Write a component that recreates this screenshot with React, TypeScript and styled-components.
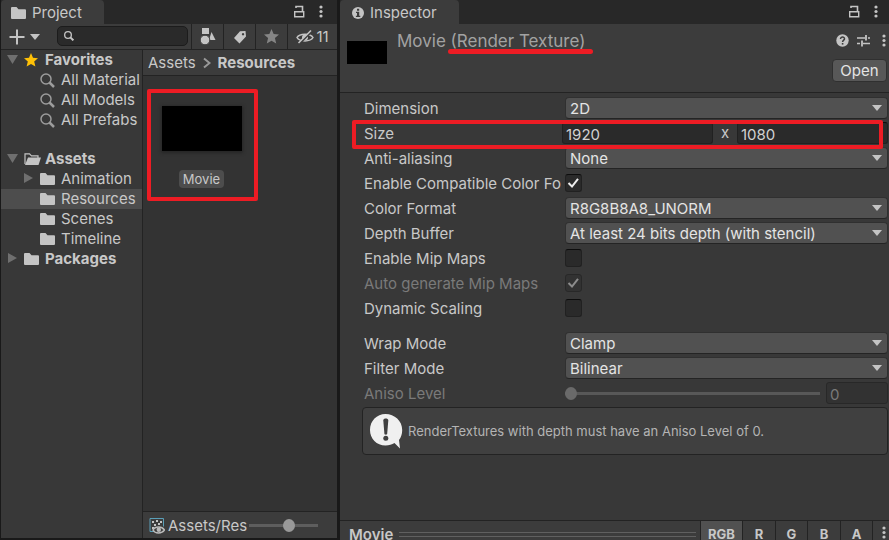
import React from "react";
import styled, { createGlobalStyle } from "styled-components";

const color = {
  edge: "#191919",
  strip: "#282828",
  bar: "#3c3c3c",
  body: "#383838",
  canvas: "#333333",
  line: "#232323",
  field: "#2a2a2a",
  control: "#515151",
  text: "#c8c8c8",
  bright: "#e4e4e4",
  faded: "#7a7a7a",
  icon: "#c4c4c4",
  mark: "#ed1c24",
};

const GlobalStyle = createGlobalStyle`
  * { box-sizing: border-box; }
  body { margin: 0; background: ${color.edge}; }
  body, button, input, select {
    font-family: Inter, "Liberation Sans", sans-serif;
    font-size: 15px;
    line-height: 20px;
    color: ${color.text};
  }
  button { padding: 0; border: 0; background: none; }
`;

const Editor = styled.div`
  display: grid;
  grid-template-columns: 337px minmax(0, 1fr);
  gap: 3px;
  height: 100vh;
  overflow: hidden;
`;

const Panel = styled.section<{ $docked?: boolean }>`
  display: flex;
  flex-direction: column;
  min-width: 0;
  min-height: 0;
  background: ${color.body};
  border-left: ${(p) => (p.$docked ? `1px solid ${color.edge}` : "0")};
  border-bottom: ${(p) => (p.$docked ? `2px solid ${color.edge}` : "0")};
`;

const TabStrip = styled.header`
  display: flex;
  flex: 0 0 24px;
  align-items: stretch;
  background: ${color.strip};
`;

const Tab = styled.button<{ $left: number }>`
  display: flex;
  align-items: center;
  gap: 6px;
  padding: 2px 22px 0 ${(p) => p.$left}px;
  background: ${color.bar};
  border-radius: 4px 4px 0 0;
`;

const StripActions = styled.div<{ $right: number }>`
  display: flex;
  align-items: center;
  gap: 14px;
  margin-left: auto;
  padding: 0 ${(p) => p.$right}px 2px 0;
`;

const IconButton = styled.button`
  display: flex;
  align-items: center;
  justify-content: center;
`;

const Toolbar = styled.div`
  display: flex;
  flex: 0 0 26px;
  background: ${color.bar};
  border-bottom: 1px solid ${color.line};
`;

const AddButton = styled.button`
  display: flex;
  align-items: center;
  gap: 5px;
  width: 56px;
  padding-left: 8px;
`;

const SearchBox = styled.label`
  display: flex;
  flex: 1;
  align-items: center;
  gap: 4px;
  min-width: 0;
  height: 20px;
  margin: 2px 3px 0 0;
  padding: 0 6px;
  background: ${color.field};
  border: 1px solid #1c1c1c;
  border-radius: 5px;

  input {
    flex: 1;
    min-width: 0;
    height: 16px;
    padding: 0;
    background: none;
    border: 0;
    outline: 0;
  }
`;

const ToolButton = styled.button<{ $wide?: boolean }>`
  display: flex;
  align-items: center;
  justify-content: center;
  gap: 2px;
  width: ${(p) => (p.$wide ? 50 : 32)}px;
  border-left: 1px solid ${color.line};
`;

const ProjectBody = styled.div`
  display: grid;
  grid-template-columns: 142px minmax(0, 1fr);
  flex: 1;
  min-height: 0;
`;

const TreePane = styled.nav`
  border-right: 1px solid ${color.line};
  overflow: hidden;
`;

const TreeList = styled.ul`
  margin: 0 0 19px;
  padding: 0;
  list-style: none;

  & + & { margin: 0; }
`;

const TreeItem = styled.button<{ $level: number; $selected?: boolean; $bold?: boolean }>`
  display: grid;
  grid-template-columns: 14px 16px auto;
  align-items: center;
  justify-content: start;
  column-gap: 5px;
  width: 100%;
  height: 20px;
  padding-left: ${(p) => 4 + p.$level * 16}px;
  background: ${(p) => (p.$selected ? "#4d4d4d" : "none")};
  font-weight: ${(p) => (p.$bold ? 700 : 400)};
  white-space: nowrap;
`;

const BrowserPane = styled.div`
  display: flex;
  flex-direction: column;
  min-width: 0;
  background: ${color.canvas};
`;

const Breadcrumb = styled.div`
  display: flex;
  flex: 0 0 26px;
  align-items: center;
  gap: 7px;
  padding-left: 5px;
  background: ${color.bar};
  border-bottom: 1px solid ${color.line};
`;

const Crumb = styled.a<{ $current?: boolean }>`
  color: ${color.text};
  font-weight: ${(p) => (p.$current ? 700 : 400)};
  text-decoration: none;
`;

const AssetGrid = styled.div`
  display: flex;
  flex: 1;
  flex-wrap: wrap;
  align-content: flex-start;
  padding: 13px 4px;
`;

const AssetTile = styled.button`
  display: flex;
  flex-direction: column;
  align-items: center;
  gap: 19px;
  width: 111px;
  height: 112px;
  padding: 13px 2px 0 0;
  border: 4px solid ${color.mark};
  border-radius: 2px;
`;

const Thumbnail = styled.span`
  width: 80px;
  height: 45px;
  background: #000;
  box-shadow: 0 1px 3px 1px #262626;
`;

const AssetName = styled.span`
  height: 18px;
  padding: 0 4px;
  background: #4d4d4d;
  border-radius: 4px;
  font-size: 13px;
  line-height: 19px;
`;

const StatusBar = styled.footer`
  display: flex;
  flex: 0 0 27px;
  align-items: center;
  gap: 3px;
  padding: 0 19px 0 6px;
  background: ${color.bar};
  border-top: 1px solid ${color.line};
`;

const StatusPath = styled.span`
  flex: 1;
  min-width: 0;
  padding-top: 2px;
  white-space: nowrap;
`;

const Range = styled.input<{ $thumb: string; $track: string }>`
  flex: 1;
  min-width: 0;
  height: 13px;
  margin: 0;
  background: none;
  appearance: none;

  &::-webkit-slider-runnable-track {
    height: 3px;
    background: ${(p) => p.$track};
  }
  &::-webkit-slider-thumb {
    appearance: none;
    width: 12px;
    height: 13px;
    margin-top: -5px;
    background: ${(p) => p.$thumb};
    border-radius: 50%;
  }
`;

const ZoomRange = styled(Range)`
  flex: 0 0 69px;
`;

const ObjectHeader = styled.div`
  display: flex;
  flex: 0 0 69px;
  gap: 10px;
  padding: 0 2px 0 7px;
  background: ${color.bar};
  border-bottom: 1px solid ${color.line};
`;

const ObjectPreview = styled.div`
  flex: 0 0 40px;
  height: 23px;
  margin-top: 17px;
  background: #000;
`;

const ObjectTitle = styled.h1`
  flex: 1;
  margin: 7px 0 0;
  color: #a2a2a2;
  font-size: 17px;
  font-weight: 400;
  line-height: 20px;
`;

const Underlined = styled.span`
  position: relative;

  &::after {
    content: "";
    position: absolute;
    left: -3px;
    right: -8px;
    top: 18px;
    height: 5px;
    background: ${color.mark};
    border-radius: 3px;
  }
`;

const HeaderActions = styled.div`
  display: flex;
  flex-direction: column;
  align-items: flex-end;
  gap: 11px;
  padding-top: 8px;
`;

const ActionIcons = styled.div`
  display: flex;
  align-items: center;
  gap: 8px;
  height: 16px;
  padding-right: 1px;

  > :last-child { padding-left: 4px; }
`;

const OpenButton = styled.button`
  width: 55px;
  height: 23px;
  background: #585858;
  border: 1px solid #303030;
  border-radius: 4px;
  color: ${color.bright};
`;

const Properties = styled.div`
  display: flex;
  flex: 1;
  flex-direction: column;
  gap: 3px;
  padding: 4px 1px 0 24px;
`;

const Group = styled.div`
  display: flex;
  flex-direction: column;
  gap: 3px;
  margin-bottom: 10px;

  & + & { margin-bottom: 0; }
`;

const PropertyRow = styled.div<{ $label?: number; $off?: boolean }>`
  position: relative;
  display: grid;
  grid-template-columns: ${(p) => p.$label ?? 201}px minmax(0, 1fr);
  align-items: center;
  height: 22px;
  color: ${(p) => (p.$off ? color.faded : color.text)};

  > label {
    padding-top: 2px;
    white-space: nowrap;
  }
`;

const MarkFrame = styled.span`
  position: absolute;
  z-index: 1;
  inset: -2px 5px -5px -12px;
  border: 4px solid ${color.mark};
  border-radius: 2px;
  pointer-events: none;
`;

const SelectBox = styled.span`
  position: relative;
  display: block;

  select {
    display: block;
    width: 100%;
    height: 22px;
    padding: 1px 24px 0 4px;
    background: ${color.control};
    border: 1px solid #303030;
    border-bottom-color: #242424;
    border-radius: 4px;
    color: ${color.bright};
    appearance: none;
  }
  svg {
    position: absolute;
    right: 6px;
    top: 8px;
    pointer-events: none;
  }
`;

const SizePair = styled.div`
  display: grid;
  grid-template-columns: minmax(0, 1fr) 24px minmax(0, 1fr);
  align-items: center;
  text-align: center;
`;

const TextField = styled.input`
  width: 100%;
  height: 22px;
  padding: 2px 3px 0;
  background: ${color.field};
  border: 1px solid #212121;
  border-top-color: #0d0d0d;
  border-radius: 3px;
  color: #d2d2d2;

  &:disabled {
    background: #323232;
    border-color: #282828;
    color: ${color.faded};
  }
`;

const SliderField = styled.div`
  display: grid;
  grid-template-columns: minmax(0, 1fr) 62px;
  align-items: center;
  gap: 6px;
`;

const CheckBox = styled.span`
  position: relative;
  width: 17px;
  height: 18px;

  input {
    display: block;
    width: 17px;
    height: 18px;
    margin: 0;
    background: ${color.field};
    border: 1px solid #212121;
    border-top-color: #0d0d0d;
    border-radius: 3px;
    appearance: none;
  }
  input:disabled {
    background: #323232;
    border-color: #282828;
  }
  svg {
    position: absolute;
    left: 2px;
    top: 3px;
    display: none;
    pointer-events: none;
  }
  input:checked + svg { display: block; }
`;

const HelpBox = styled.p`
  display: flex;
  align-items: center;
  gap: 5px;
  height: 48px;
  margin: 0 0 0 -2px;
  padding-left: 6px;
  background: #404040;
  border: 1px solid ${color.line};
  border-radius: 4px;
  color: #b4b4b4;
  font-size: 13px;
`;

const PreviewBar = styled.footer`
  display: flex;
  flex: 0 0 20px;
  overflow: hidden;
  background: ${color.bar};
  border-top: 1px solid ${color.line};
`;

const PreviewTitle = styled.h2`
  margin: 0;
  padding: 4px 6px 0 9px;
  font-size: 15px;
  font-weight: 600;
  line-height: 20px;
`;

const DragHandle = styled.div`
  flex: 1;
  height: 5px;
  margin: 11px 4px 0 0;
  border: solid #606060;
  border-width: 1px 0;
`;

const ChannelButton = styled.button<{ $width: number; $active?: boolean }>`
  width: ${(p) => p.$width}px;
  height: 26px;
  background: ${(p) => (p.$active ? color.control : "none")};
  border-left: 1px solid ${color.line};
  font-size: 13px;
  font-weight: 700;
`;

const PreviewMenu = styled(ChannelButton)`
  padding-left: 5px;
`;

const Folder = () => (
  <svg width="15" height="12" viewBox="0 0 15 12" fill={color.icon}>
    <path d="M0 1a1 1 0 0 1 1-1h4.500l2 2.200H14a1 1 0 0 1 1 1V11a1 1 0 0 1-1 1H1a1 1 0 0 1-1-1z" />
  </svg>
);

const OpenFolder = () => (
  <svg width="17" height="12" viewBox="0 0 17 12" fill={color.icon}>
    <path d="M1 11V0.800h4.500l2 2H14V5" fill="none" stroke={color.icon} strokeWidth="1.200" />
    <path d="M4 4.500h13L14.500 12H1z" />
  </svg>
);

const Star = ({ fill, size }: { fill: string; size: number }) => (
  <svg width={size} height={size} viewBox="0 0 14 14" fill={fill}>
    <path d="M7 0l2 4.700 5 .500-3.800 3.300 1.200 5L7 10.900 2.600 13.500l1.200-5L0 5.200l5-.500z" />
  </svg>
);

const Lens = ({ size, stroke, width }: { size: number; stroke: string; width: number }) => (
  <svg width={size} height={size} viewBox="0 0 15 15" fill="none" stroke={stroke}>
    <circle cx="6" cy="6" r="5" strokeWidth={width} />
    <path d="M9.500 9.500l4.500 4.500" strokeWidth={width + 1} />
  </svg>
);

const FoldArrow = ({ open }: { open: boolean }) => (
  <svg width="12" height="12" viewBox="0 0 12 12" fill="#6f6f6f">
    {open ? <path d="M1 2h11L6.500 11z" /> : <path d="M2 1l9 5-9 5z" />}
  </svg>
);

const Caret = () => (
  <svg width="10" height="6" viewBox="0 0 10 6" fill={color.icon}>
    <path d="M0 0h10L5 6z" />
  </svg>
);

const Lock = () => (
  <svg width="12" height="13" viewBox="0 0 12 13" fill="none" stroke={color.icon}>
    <path d="M1.700 6.700h9v5h-9z" strokeWidth="1.400" />
    <path d="M3 3V1.500h6.500v5" strokeWidth="1.600" />
  </svg>
);

const Kebab = () => (
  <svg width="4" height="13" viewBox="0 0 4 13" fill={color.icon}>
    <circle cx="2" cy="2" r="1.600" />
    <circle cx="2" cy="6.500" r="1.600" />
    <circle cx="2" cy="11" r="1.600" />
  </svg>
);

const Plus = () => (
  <svg width="16" height="16" viewBox="0 0 16 16" stroke={color.icon} strokeWidth="2">
    <path d="M8 0.500v15M0.500 8h15" />
  </svg>
);

const Shapes = () => (
  <svg width="16" height="17" viewBox="0 0 16 17" fill={color.icon}>
    <path d="M2 0h7v6H2zM11.500 4l4 8H9z" />
    <circle cx="5" cy="12" r="4.800" stroke={color.bar} strokeWidth="1" />
  </svg>
);

const TagIcon = () => (
  <svg width="14" height="14" viewBox="0 0 14 14" fill={color.icon}>
    <path
      fillRule="evenodd"
      d="M7 1.200L12.500 1l.5 5.500-6.500 7L1 8zM10 3a1.200 1.200 0 1 0 .100 0z"
    />
  </svg>
);

const HiddenEye = () => (
  <svg width="18" height="16" viewBox="0 0 18 16" fill="none" stroke={color.icon}>
    <path d="M1 8.500C3.500 4 14.500 4 17 8.500 14.500 13 3.500 13 1 8.500z" strokeWidth="1.500" />
    <circle cx="9" cy="8.500" r="3" fill={color.icon} stroke="none" />
    <path d="M3.500 14.500L16 2" stroke={color.bar} strokeWidth="2" />
    <path d="M2.500 14L15 1.500" strokeWidth="1.600" />
  </svg>
);

const CrumbArrow = () => (
  <svg width="8" height="12" viewBox="0 0 8 12" fill="none" stroke="#999" strokeWidth="2">
    <path d="M1 1.500L6.500 6 1 10.500" />
  </svg>
);

const PreviewFile = () => (
  <svg width="16" height="17" viewBox="0 0 16 17" fill="none">
    <path d="M5 14.500H1v-13h13.500v8" stroke="#5a9fb8" />
    <path
      d="M3 4h2v2H3zM7 3h2v2H7zM11 4h2v2h-2zM5 7h2v2H5zM9 6h2v2H9zM3 10h2v2H3z"
      fill={color.icon}
    />
    <path d="M4 13c2-4 9-4 11.500 0-2.500 4-9.500 4-11.500 0z" fill={color.bar} stroke="#bbb" strokeWidth="1.500" />
    <circle cx="9.800" cy="12.700" r="2.200" fill="#bbb" />
  </svg>
);

const Info = () => (
  <svg width="12" height="12" viewBox="0 0 12 12">
    <circle cx="6" cy="6" r="6" fill={color.icon} />
    <path d="M5 1.800h2.200v2H5zM4 4.800h3.200v4H8.300v1.200H3.900V8.800H5V6H4z" fill={color.bar} />
  </svg>
);

const Help = () => (
  <svg width="13" height="13" viewBox="0 0 13 13" fill="none">
    <circle cx="6.500" cy="6.500" r="6.200" fill={color.icon} />
    <path d="M4.500 5C4.500 2.300 8.700 2.500 8.500 4.900 8.400 6.200 6.600 6.200 6.600 8" stroke={color.bar} strokeWidth="1.500" />
    <path d="M5.800 9h1.600v1.600H5.800z" fill={color.bar} />
  </svg>
);

const Sliders = () => (
  <svg width="13" height="13" viewBox="0 0 13 13" fill="none" stroke={color.icon}>
    <path d="M0 4h8M11 4h2M0 9.500h3M6 9.500h7" strokeWidth="1.300" />
    <path d="M9 1v5.500M5 6.500v6" strokeWidth="1.800" />
  </svg>
);

const Tick = ({ stroke }: { stroke: string }) => (
  <svg width="13" height="12" viewBox="0 0 13 12" fill="none" stroke={stroke} strokeWidth="2">
    <path d="M1.500 6l3.500 3.500L11 1.800" />
  </svg>
);

const Notice = () => (
  <svg width="34" height="36" viewBox="0 0 34 36">
    <path
      d="M16.500 1C7.800 1 1 7.800 1 17c0 8.700 6.500 15.500 15.500 15.500 3.500 0 6.500-.700 9-2.400L31 35.500l-1-8.500c2-2.500 3.200-6 3.200-10C33.200 7.800 25.500 1 16.500 1z"
      fill="#f0f0f0"
    />
    <path d="M14.300 7.500c0-2.600 5-2.600 5 0l-1.100 13.300c-.2 1.200-2.600 1.200-2.800 0z" fill="#404040" />
    <circle cx="16.800" cy="25.300" r="2.500" fill="#404040" />
  </svg>
);

function TreeRow(props: {
  label: string;
  icon: React.ReactNode;
  level?: number;
  open?: boolean;
  selected?: boolean;
  bold?: boolean;
}) {
  return (
    <li>
      <TreeItem $level={props.level ?? 0} $selected={props.selected} $bold={props.bold}>
        <span>{props.open !== undefined && <FoldArrow open={props.open} />}</span>
        {props.icon}
        {props.label}
      </TreeItem>
    </li>
  );
}

function SelectRow({ id, label, value }: { id: string; label: string; value: string }) {
  return (
    <PropertyRow>
      <label htmlFor={id}>{label}</label>
      <SelectBox>
        <select id={id} defaultValue={value}>
          <option>{value}</option>
        </select>
        <Caret />
      </SelectBox>
    </PropertyRow>
  );
}

function CheckRow(props: { id: string; label: string; checked?: boolean; disabled?: boolean }) {
  return (
    <PropertyRow $off={props.disabled}>
      <label htmlFor={props.id}>{props.label}</label>
      <CheckBox>
        <input id={props.id} type="checkbox" defaultChecked={props.checked} disabled={props.disabled} />
        <Tick stroke={props.disabled ? "#8c8c8c" : "#ececec"} />
      </CheckBox>
    </PropertyRow>
  );
}

function ProjectPanel() {
  const lens = <Lens size={15} stroke="#9c9c9c" width={1.5} />;
  return (
    <Panel $docked>
      <TabStrip>
        <Tab $left={10}>
          <Folder />
          Project
        </Tab>
        <StripActions $right={14}>
          <IconButton aria-label="Lock project panel"><Lock /></IconButton>
          <IconButton aria-label="Project panel menu"><Kebab /></IconButton>
        </StripActions>
      </TabStrip>
      <Toolbar>
        <AddButton aria-label="Create asset">
          <Plus />
          <Caret />
        </AddButton>
        <SearchBox>
          <Lens size={10} stroke={color.icon} width={2} />
          <input type="text" aria-label="Search assets" />
        </SearchBox>
        <ToolButton aria-label="Search by type"><Shapes /></ToolButton>
        <ToolButton aria-label="Search by label"><TagIcon /></ToolButton>
        <ToolButton aria-label="Save search"><Star fill="#858585" size={15} /></ToolButton>
        <ToolButton $wide aria-label="Hidden packages">
          <HiddenEye />
          11
        </ToolButton>
      </Toolbar>
      <ProjectBody>
        <TreePane>
          <TreeList>
            <TreeRow label="Favorites" icon={<Star fill="#ffc107" size={14} />} open bold />
            <TreeRow label="All Material" icon={lens} level={1} />
            <TreeRow label="All Models" icon={lens} level={1} />
            <TreeRow label="All Prefabs" icon={lens} level={1} />
          </TreeList>
          <TreeList>
            <TreeRow label="Assets" icon={<OpenFolder />} open bold />
            <TreeRow label="Animation" icon={<Folder />} level={1} open={false} />
            <TreeRow label="Resources" icon={<Folder />} level={1} selected />
            <TreeRow label="Scenes" icon={<Folder />} level={1} />
            <TreeRow label="Timeline" icon={<Folder />} level={1} />
            <TreeRow label="Packages" icon={<Folder />} open={false} bold />
          </TreeList>
        </TreePane>
        <BrowserPane>
          <Breadcrumb>
            <Crumb href="#assets">Assets</Crumb>
            <CrumbArrow />
            <Crumb href="#resources" $current>Resources</Crumb>
          </Breadcrumb>
          <AssetGrid>
            <AssetTile>
              <Thumbnail />
              <AssetName>Movie</AssetName>
            </AssetTile>
          </AssetGrid>
          <StatusBar>
            <PreviewFile />
            <StatusPath>Assets/Res</StatusPath>
            <ZoomRange type="range" defaultValue={60} aria-label="Icon size" $thumb="#999999" $track="#5e5e5e" />
          </StatusBar>
        </BrowserPane>
      </ProjectBody>
    </Panel>
  );
}

function InspectorPanel() {
  return (
    <Panel>
      <TabStrip>
        <Tab $left={12}>
          <Info />
          Inspector
        </Tab>
        <StripActions $right={11}>
          <IconButton aria-label="Lock inspector"><Lock /></IconButton>
          <IconButton aria-label="Inspector menu"><Kebab /></IconButton>
        </StripActions>
      </TabStrip>
      <ObjectHeader>
        <ObjectPreview />
        <ObjectTitle>
          Movie <Underlined>(Render Texture)</Underlined>
        </ObjectTitle>
        <HeaderActions>
          <ActionIcons>
            <IconButton aria-label="Help"><Help /></IconButton>
            <IconButton aria-label="Presets"><Sliders /></IconButton>
            <IconButton aria-label="Object menu"><Kebab /></IconButton>
          </ActionIcons>
          <OpenButton>Open</OpenButton>
        </HeaderActions>
      </ObjectHeader>
      <Properties>
        <Group>
          <SelectRow id="dimension" label="Dimension" value="2D" />
          <PropertyRow $label={198}>
            <label htmlFor="size-width">Size</label>
            <SizePair>
              <TextField id="size-width" defaultValue="1920" />
              x
              <TextField aria-label="Height" defaultValue="1080" />
            </SizePair>
            <MarkFrame />
          </PropertyRow>
          <SelectRow id="aliasing" label="Anti-aliasing" value="None" />
          <CheckRow id="compatible" label="Enable Compatible Color Fo" checked />
          <SelectRow id="format" label="Color Format" value="R8G8B8A8_UNORM" />
          <SelectRow id="depth" label="Depth Buffer" value="At least 24 bits depth (with stencil)" />
          <CheckRow id="mips" label="Enable Mip Maps" />
          <CheckRow id="auto-mips" label="Auto generate Mip Maps" checked disabled />
          <CheckRow id="scaling" label="Dynamic Scaling" />
        </Group>
        <Group>
          <SelectRow id="wrap" label="Wrap Mode" value="Clamp" />
          <SelectRow id="filter" label="Filter Mode" value="Bilinear" />
          <PropertyRow $off>
            <label htmlFor="aniso">Aniso Level</label>
            <SliderField>
              <Range id="aniso" type="range" min={0} max={16} defaultValue={0} disabled $thumb="#6a6a6a" $track="#585858" />
              <TextField aria-label="Aniso level value" defaultValue="0" disabled />
            </SliderField>
          </PropertyRow>
        </Group>
        <HelpBox>
          <Notice />
          RenderTextures with depth must have an Aniso Level of 0.
        </HelpBox>
      </Properties>
      <PreviewBar>
        <PreviewTitle>Movie</PreviewTitle>
        <DragHandle />
        <ChannelButton $width={42} $active>RGB</ChannelButton>
        <ChannelButton $width={33}>R</ChannelButton>
        <ChannelButton $width={32}>G</ChannelButton>
        <ChannelButton $width={33}>B</ChannelButton>
        <ChannelButton $width={32}>A</ChannelButton>
        <PreviewMenu $width={17} aria-label="Preview menu"><Kebab /></PreviewMenu>
      </PreviewBar>
    </Panel>
  );
}

export default function App() {
  return (
    <>
      <GlobalStyle />
      <Editor>
        <ProjectPanel />
        <InspectorPanel />
      </Editor>
    </>
  );
}
